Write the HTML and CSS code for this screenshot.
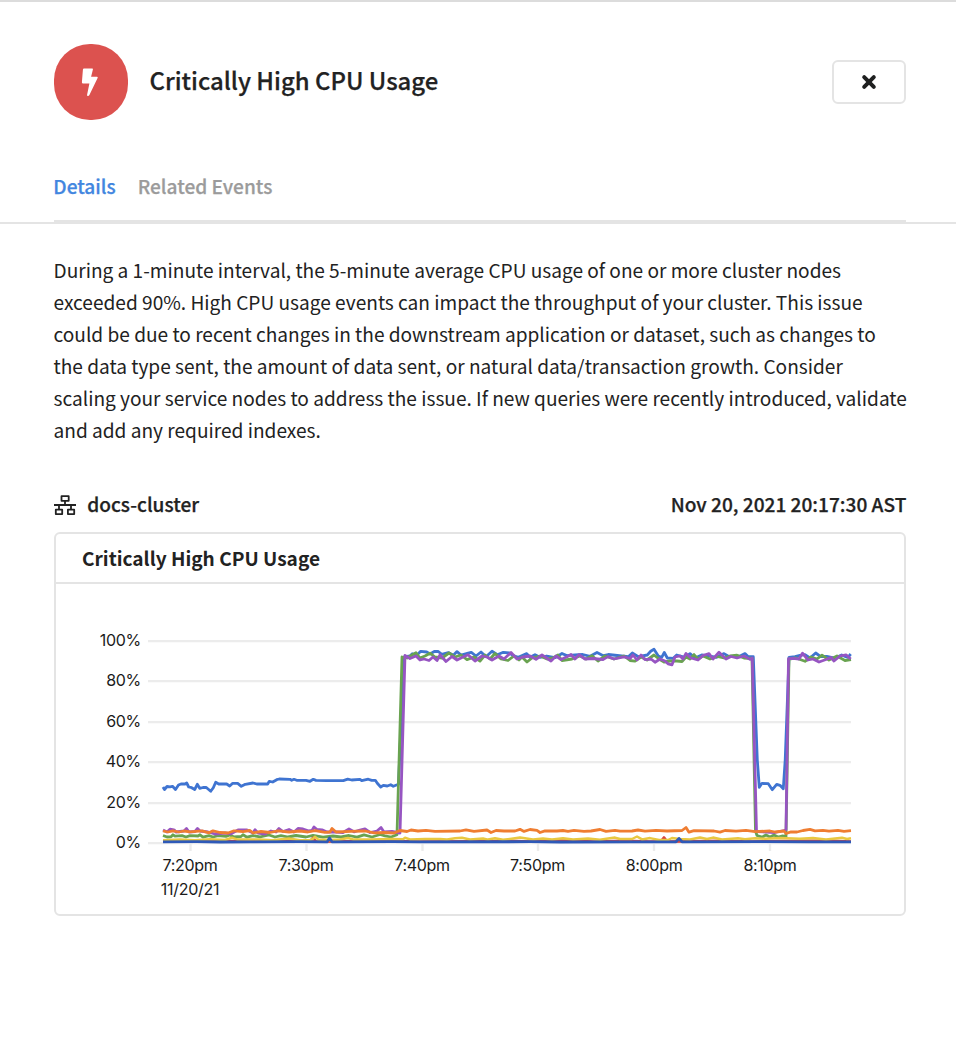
FILE: index.html
```html
<!DOCTYPE html>
<html lang="en">
<head>
<meta charset="utf-8">
<title>Critically High CPU Usage</title>
<link rel="stylesheet" href="styles.css">
</head>
<body>
<header class="header">
  <div class="title-row">
    <div class="badge">
      <svg width="76" height="76" viewBox="53 44 76 76" aria-hidden="true"><path d="M84 68.5h8.2q1 0 .7 1l-1.8 7.2h5.7q1.4 0 .8 1.3l-8.2 17q-.5 1-1.5 1-1.1 0-.8-1.3l2.3-11.2h-6.3q-1.3 0-1.2-1.2l1-12.6q.1-1.2 1.1-1.2z" fill="#fff"/></svg>
    </div>
    <h1 class="title">Critically High CPU Usage</h1>
    <button class="close" aria-label="Close">
      <svg width="16" height="16" viewBox="0 0 16 16"><path d="M3.2 3.2l9.6 9.6M12.8 3.2l-9.6 9.6" stroke="#1f2020" stroke-width="4" stroke-linecap="round"/></svg>
    </button>
  </div>
  <nav class="tabs"><a class="tab active">Details</a><a class="tab">Related Events</a></nav>
</header>
<main class="content">
  <p class="description">During a 1-minute interval, the 5-minute average CPU usage of one or more cluster nodes<br>exceeded 90%. High CPU usage events can impact the throughput of your cluster. This issue<br>could be due to recent changes in the downstream application or dataset, such as changes to<br>the data type sent, the amount of data sent, or natural data/transaction growth. Consider<br>scaling your service nodes to address the issue. If new queries were recently introduced, validate<br>and add any required indexes.</p>
  <div class="meta">
    <svg class="cluster-icon" width="22" height="21" viewBox="0 0 22 21" fill="none" stroke="#222"><path d="M7.5 1.2h7.2v4.6H7.5zM1.8 14.7h6.4v4.4H1.8zM13.9 14.7h6.3v4.4h-6.3z" stroke-width="1.8" stroke-linejoin="round"/><path d="M0 10h22M11 6v4M5 10v4.5M17 10v4.5" stroke-width="1.8"/></svg>
    <span class="cluster">docs-cluster</span>
    <time class="time">Nov 20, 2021 20:17:30 AST</time>
  </div>
  <section class="card">
    <h2 class="card-title">Critically High CPU Usage</h2>
    <svg class="chart" width="848" height="330" viewBox="56 584 848 330">
      <path class="grid" d="M148 641.2H851M148 681.2H851M148 722.2H851M148 762.2H851M148 803.2H851M148 843.2H851M190.5 843v8M306.5 843v8M422.5 843v8M538 843v8M654 843v8M770 843v8"/>
      <g class="labels y-labels">
        <text x="141" y="646">100%</text><text x="141" y="686">80%</text><text x="141" y="727">60%</text><text x="141" y="767">40%</text><text x="141" y="808">20%</text><text x="141" y="848">0%</text>
      </g>
      <g class="labels x-labels">
        <text x="190" y="871">7:20pm</text><text x="190" y="895">11/20/21</text><text x="306" y="871">7:30pm</text><text x="422" y="871">7:40pm</text><text x="537.5" y="871">7:50pm</text><text x="654" y="871">8:00pm</text><text x="770" y="871">8:10pm</text>
      </g>
      <g class="series">
        <polyline stroke="#3f74d1" points="163,787 164.5,789.5 167,786.5 170,786.8 172.5,786.3 175.5,789.5 178.5,785 181,784 185,784 186.7,783 188.7,787 191.7,787.7 194.7,789.5 197.3,784.3 199.7,788.3 203,787.5 206,787.3 210.7,791.3 213.3,787.7 215.7,782.3 218.7,784 226.7,784 229.7,786 232.7,783.3 237.7,783.3 241.3,786.3 245.3,784.3 253,783 256.7,784 267.7,784 269.3,781.3 272.7,782 276.7,779.7 279.3,779 290,779.3 291.7,780.3 294,779.3 296.7,780.3 306,780.3 310,781.3 313.3,779.3 316,780.4 326.7,780.6 343.3,780.6 347.7,779.2 351.7,780 360,779.4 361.7,780.7 368.3,779.2 371.7,780.4 375.3,780.3 377.3,783.3 380.7,787 383.3,785.3 387.3,786 390.7,784.7 393.3,786.3 398.5,784.3 404,657 410,656 412.3,653.7 416.7,655.3 420.7,651.3 426.7,652 430,654 434.3,651.5 438.3,651.5 441.7,654.3 448.3,652.6 453.3,655.3 457,651.6 461,655 467.3,653.3 471.3,652.3 476,656 481,652 486,656.7 492,651.3 497.3,654.7 503.3,652.3 509.3,653 513.3,655.7 518.3,657.3 526.7,653.6 530,657.3 535,654.7 540,657.3 546.7,656 555,657.7 562,653.5 566.7,655.6 575,655 582.7,654.5 590,656.3 597,652.5 603.3,655.7 608.3,654.5 621.7,656 628.3,656.7 632.3,653 638.3,656.7 647.3,655 650.7,651.3 654,649.3 658.3,656 661.7,657.3 664.3,652.5 667.3,658 673.3,658.3 676.7,655 685,657.3 690,653.6 695,658 701.7,655 710,656 716.7,657.3 724,653.6 729.3,656.7 740,656 745,653.6 748.3,656.7 753.3,656.7 757.3,760 759.3,787.3 762,783.3 768.3,783.7 772.3,789.7 776.7,784.3 780,785.3 783.3,788.7 785.2,760 789,657.3 795,656.7 800,655.3 805,654.7 810,658 815.7,653 820.7,656.7 826.7,656.3 835,658 841.7,655 845.7,656.7 848,657.3 850.7,654"/>
        <polyline stroke="#69a350" points="163,835.5 167,837 171,836.8 173,834.8 175,836.2 182,835.7 186,837 190,835.7 198,836 200,834.8 203,837.2 209,835.7 213,837 218,835.6 226,836.3 230,835 234,837 241,836.5 243,834.8 247,837.2 253,835.6 260,836.8 269,835 275,837 281,835.6 288,837 296,835.5 306,837 313,835.4 323,837.2 333,836 341,837 349,835.5 357,837.2 364,834.9 372,837 380,834.5 385,835.8 391,837 397,834.7 402,657 407,658 412,655 416,652.8 420,658 425,656 430,653.2 435,657 442,658 449,653 455,657 461,655 467,659.6 474,657 480,661 485,655 490,659 495,653.5 501,659 508,660.5 514,656 519,660 522,657 527,662 532,658 540,656 547,659 553,658 558,655 562,660.5 572,659 580,656 586,659 592,655.7 598,661 605,656 614,659 624,656 630,660.5 635,661.2 641,657 647,660 654,655 659,659 664,662 670,661 677,661 682,661.5 686,657 690,659 694,654.6 698,659 703,656 710,659 717,656.5 724,658 730,656 737,655.2 744,658 752,658.5 755.5,831 757,835.5 762,837.2 766,835 770,837 774,835 778,837 782,836 786,836.5 789,659 796,658 805,661.3 811,657 817,659 822,655.2 829,660 837,656 845,660.5 851,659.5"/>
        <polyline stroke="#9755c2" points="163,830 167,832 170,829.2 174,829.8 176,832 184,831 186.5,828.5 189,832 195,831.5 197.5,828.5 200,831 208,832 215,834 225,833 231,833.8 238,830 247,830 253,833 255,829.8 258,833 265,834 271,831 276,832 279,828.5 283,831.5 289,829.5 294,832 298,828.5 303,829 309,831 312,830.5 314,827 317,829.5 322,829.8 327,832 336,832 343,832.5 349,829 354,831.8 360,830 365,828.8 370,832.5 377,831 381,827.5 384,832 392,831.5 400,833 405,655.5 410,658.5 416,656 420,660 424,659 429,660.5 433,657 437,660.5 440,654.8 446,661.5 452,656.5 457,660 463,657 468,654.7 475,661 482,656 487,657 492,660 499,656 504,659 511,652.5 517,659 523,657 530,656 536,659.3 542,655 551,661 556,656 561,659.5 567,656.8 571,654.5 575,659 579,654.6 585,659 593,658.5 603,659.5 608,656.6 614,659 624,656.8 630,658.5 633,655 637,660 641,655 645,659.6 651,659 655,662.2 660,659 665,661 668,663.8 672,664.8 675,657 680,656 683,659 686,653.5 691,658 698,660 703,655.5 709,653.6 713,659 719,652.3 726,659 731,656.5 737,658 744,656 750,659.4 752.2,658 756.5,831.5 775,832.5 784,830.5 786,829.7 788.5,658.7 793,658.3 799,659 802.5,653.2 808,660 813,659 819,662 826,659.5 831,657.5 834,661 840,656 846,654.8 850.7,659"/>
        <polyline stroke="#ef7d31" points="163,831 168,832 173,830.8 179,832 184,831 190,831.8 202,830.8 209,832.8 213,830.8 220,832.5 228,833 234,830.8 243,831.7 250,830.5 253,832.8 261,831.5 270,832.5 278,830.8 289,832 300,831 308,832 315,830.6 325,832.3 330,832 332,828.5 336,832 351,831.3 365,831 374,832.8 384,832.5 394,833 400,830.5 407,831.5 411,830 418,831 426,830.4 435,831.3 460,831 466,829.8 474,831.4 487,830 491,832.5 496,830.5 504,831 515,831 520,829.3 524,831.4 530,829.5 537,830.4 540,832.5 545,830.8 557,831 563,830.5 568,831.4 574,830.4 584,831.4 591,831 600,829.5 606,831.4 615,830.3 620,831.2 632,831 638,830 645,831.1 656,830.4 667,831 682,830.5 686,827.5 689,832.2 694,830.7 714,831 720,832.2 725,830.5 736,831.2 746,830.3 755,831.6 770,831 775,832 784,831 786,833.5 791,831.8 797,832 803,830.5 810,829.4 815,830.8 823,830.4 829,831.2 838,830.4 844,831.3 851,830.7"/>
        <polyline stroke="#d9433e" points="163,841.6 176,840.9 200,841.6 218,840.9 250,841.6 290,841 310,841.6 313,838 316,841.6 350,841.4 380,841 420,841.6 480,841.3 510,840.8 530,841.6 562,840.7 595,841.6 624,840.8 650,841.6 661,841.3 664,837.5 667,841.6 725,840.8 750,841.6 805,840.8 832,840.8 851,841.6"/>
        <polyline stroke="#e9c840" stroke-width="2.5" points="163,840.2 180,839.6 195,840.2 210,839.3 225,840 232,837.8 237,839.4 260,839.4 272,840.2 289,838.4 300,840.2 310,840.2 313,838.6 315,836.8 318,839.4 330,840 340,839.4 348,838 353,839.4 370,839.6 392,839 403,839.2 405,837.8 410,839.4 425,839 440,838.9 447,839.4 455,838.3 462,837.8 470,839.4 483,838.5 488,839.6 495,838.3 503,839.8 520,837.6 533,839.4 543,838.4 552,839.4 563,838.2 573,839.6 588,838.5 600,839.8 608,838.4 615,837.6 620,839 632,839 637,836.5 642,839.4 650,838.1 659,840 668,840 672,838 680,839 690,839.6 700,837.6 707,839 713,837.6 722,839.4 738,838.2 745,839.2 755,838.2 765,838.8 780,838 800,838.8 813,838.1 826,839.6 842,837.8 847,839 851,838.2"/>
        <polyline stroke="#2e59b8" points="163,841.9 197,841.7 220,842 250,841.8 300,841.7 327,841.9 329.5,838 332,841.8 393,841.7 420,841.9 530,841.7 560,842 630,841.9 676,841.8 679,838.4 682,841.8 760,841.7 810,841.9 851,841.9"/>
      </g>
    </svg>
  </section>
</main>
</body>
</html>
```
FILE: styles.css
```css
* { box-sizing: border-box; }
body {
  margin: 0;
  min-height: 1055px;
  background: #fff;
  color: #222;
  font-family: "Source Sans Pro", "Noto Sans CJK SC", sans-serif;
  font-size: 19.1px;
  border-top: 2px solid #dcdcdc;
}
.header {
  height: 222px;
  padding: 42px 50px 0 54px;
  border-bottom: 2px solid #e4e4e4;
}
.title-row { display: flex; align-items: center; height: 76px; }
.badge {
  width: 74px;
  height: 76px;
  border-radius: 36px;
  background: #dc524f;
  display: flex;
  justify-content: center;
}
.badge svg { flex: none; }
.title { margin: 0 0 5px 21.5px; font-size: 23.9px; line-height: 36px; font-weight: 500; }
.close {
  margin-left: auto;
  width: 74px;
  height: 44px;
  padding: 0;
  border: 2px solid #e4e4e4;
  border-radius: 6px;
  background: #fff;
  display: flex;
  align-items: center;
  justify-content: center;
}
.tabs {
  display: flex;
  gap: 22px;
  height: 102px;
  padding-top: 51px;
  border-bottom: 2px solid #e4e4e4;
  line-height: 30px;
  font-weight: 500;
}
.tab { color: #9b9b9b; }
.tab.active { margin-left: -.7px; color: #4286e0; }
.title, .tab, .cluster, .time { -webkit-text-stroke: .25px currentColor; }
.content { padding: 30px 50px 0 53.5px; }
.description { margin: 0; line-height: 32px; white-space: nowrap; }
.meta { display: flex; align-items: center; height: 30px; margin-top: 44px; font-weight: 500; line-height: 28px; }
.cluster-icon { margin: 1px 0 0 .5px; }
.cluster { margin: 0 0 3px 11.2px; }
.time { margin: 0 -.3px 3px auto; }
.card { margin: 12px 0 0 .5px; height: 384px; border: 2px solid #e4e4e4; border-radius: 6px; }
.card-title {
  margin: 0;
  height: 50px;
  padding-left: 26px;
  border-bottom: 2px solid #e4e4e4;
  font-size: 19.1px;
  line-height: 49px;
  font-weight: 700;
}
.chart { display: block; }
.grid { stroke: #ececec; stroke-width: 2.3; fill: none; }
.labels { font-family: Inter, sans-serif; font-size: 16px; letter-spacing: -.3px; fill: #1b1b1b; }
.y-labels { text-anchor: end; }
.x-labels { text-anchor: middle; }
.series { fill: none; stroke-width: 2.8; stroke-linejoin: round; }
```
